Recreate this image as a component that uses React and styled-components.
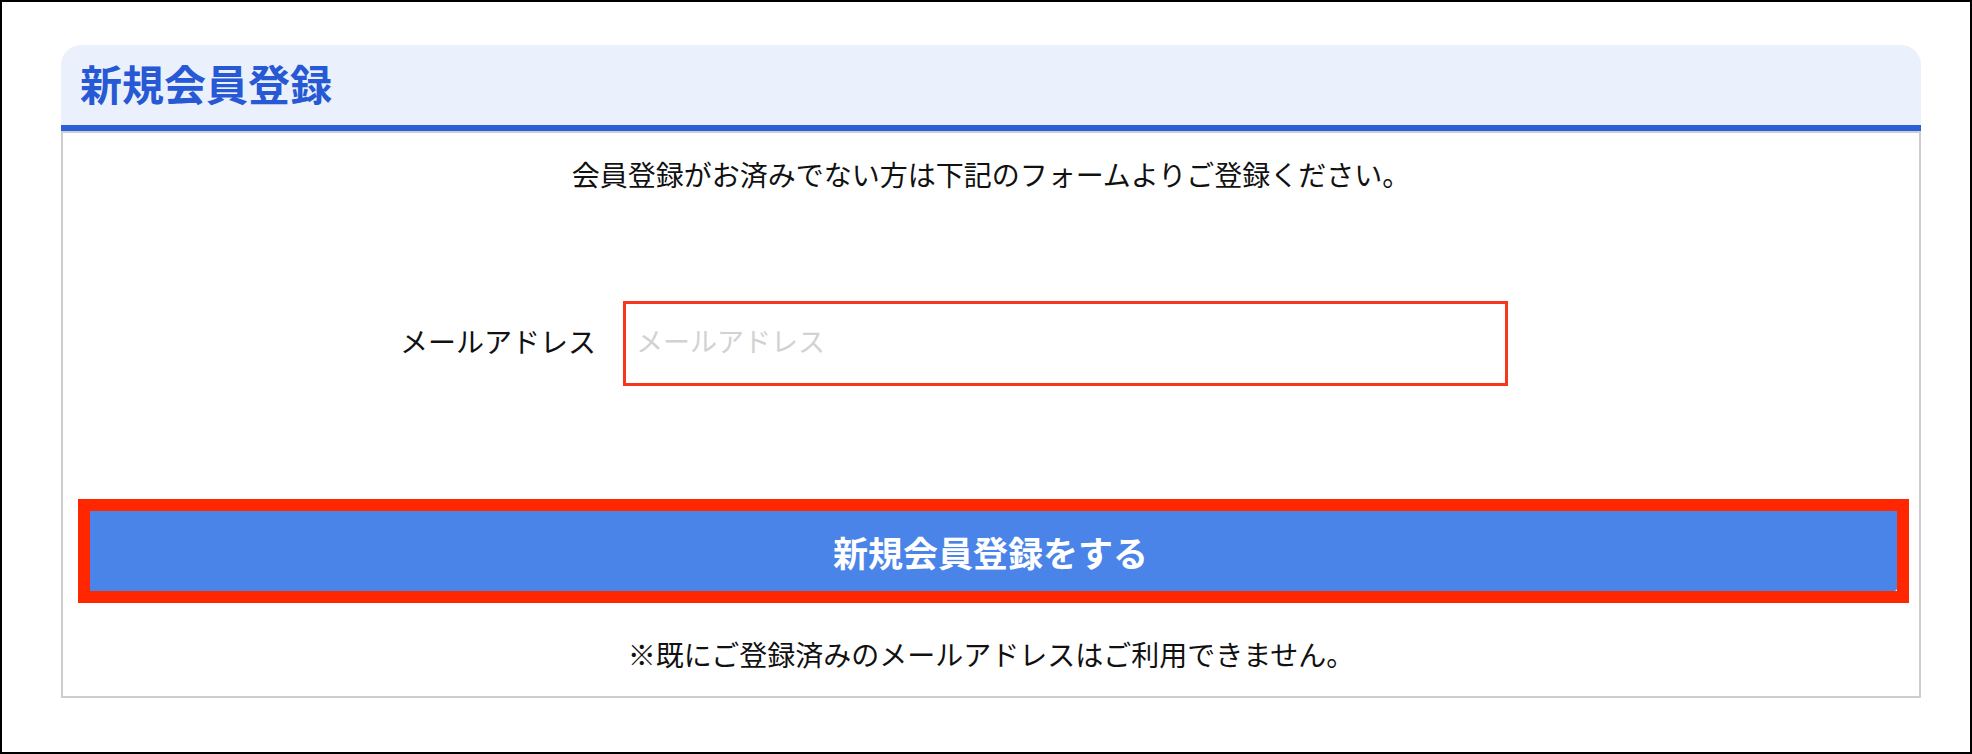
import React from "react";
import styled, { createGlobalStyle } from "styled-components";

const GlobalStyle = createGlobalStyle`
  html, body {
    margin: 0;
    padding: 0;
    background: #fff;
  }
  body {
    font-family: "Noto Sans CJK JP", "Noto Sans", sans-serif;
    color: #111;
  }
  * {
    box-sizing: border-box;
  }
`;

const Frame = styled.div`
  height: 754px;
  border: 2px solid #000;
  background: #fff;
  padding: 43px 49px 0 59px;
`;

const Card = styled.section`
  display: flex;
  flex-direction: column;
`;

const Header = styled.header`
  height: 86px;
  display: flex;
  align-items: center;
  padding: 0 0 4px 19px;
  background: #ebf0fd;
  border-radius: 20px 20px 0 0;
  border-bottom: 6px solid #2a5fd6;
`;

const Title = styled.h2`
  margin: 0;
  font-size: 42px;
  font-weight: 700;
  line-height: 1;
  color: #2659d3;
`;

const Body = styled.div`
  display: flex;
  flex-direction: column;
  align-items: stretch;
  border: 2px solid #cdcdcd;
  padding: 21px 0 22px;
`;

const Lead = styled.p`
  margin: 0;
  font-size: 28px;
  line-height: 40px;
  text-align: center;
`;

const FieldRow = styled.div`
  display: grid;
  grid-template-columns: 533px 885px;
  column-gap: 27px;
  align-items: center;
  margin-top: 107px;
`;

const Label = styled.label`
  font-size: 28px;
  line-height: 40px;
  padding-bottom: 6px;
  text-align: right;
`;

const Input = styled.input`
  height: 85px;
  border: 3px solid #f7361e;
  padding: 0 10px 6px;
  font-family: inherit;
  font-size: 27px;
  color: #111;
  outline: none;
  background: #fff;

  &::placeholder {
    color: #d2d2d2;
  }
`;

const Highlight = styled.div`
  margin: 113px 10px 0 15px;
  border: 12px solid #ff2600;
`;

const SubmitButton = styled.button`
  display: block;
  width: 100%;
  height: 80px;
  border: none;
  border-radius: 0 0 3px 0;
  background: #4a84e8;
  color: #fff;
  font-family: inherit;
  font-size: 35px;
  font-weight: 700;
  padding: 0 6px 0 0;
  cursor: pointer;
`;

const Note = styled.p`
  margin: 31px 0 0;
  font-size: 28px;
  line-height: 40px;
  text-align: center;
`;

export default function App() {
  return (
    <>
      <GlobalStyle />
      <Frame>
        <Card>
          <Header>
            <Title>新規会員登録</Title>
          </Header>
          <Body>
            <Lead>会員登録がお済みでない方は下記のフォームよりご登録ください。</Lead>
            <FieldRow>
              <Label htmlFor="email">メールアドレス</Label>
              <Input id="email" type="email" placeholder="メールアドレス" />
            </FieldRow>
            <Highlight>
              <SubmitButton type="button">新規会員登録をする</SubmitButton>
            </Highlight>
            <Note>※既にご登録済みのメールアドレスはご利用できません。</Note>
          </Body>
        </Card>
      </Frame>
    </>
  );
}
